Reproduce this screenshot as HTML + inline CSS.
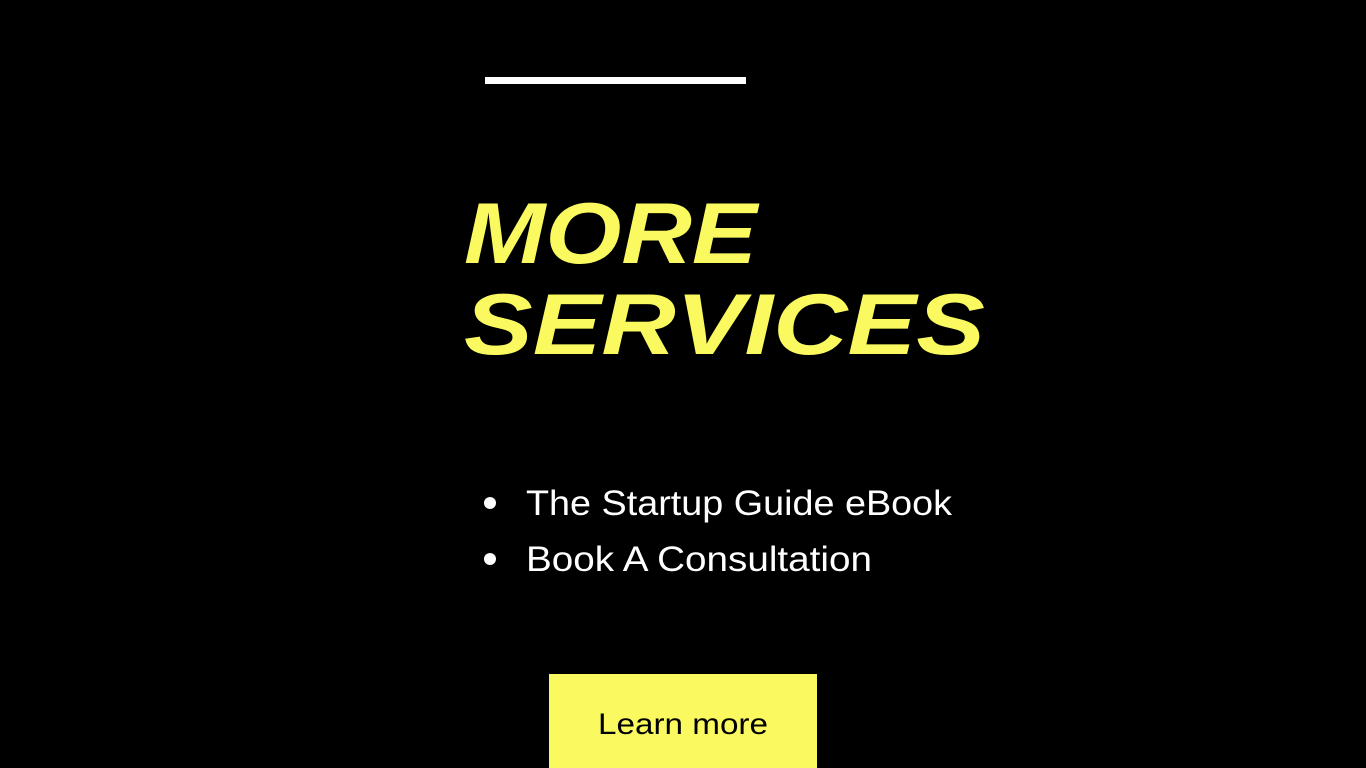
<!DOCTYPE html>
<html><head><meta charset="utf-8"><style>
html,body{margin:0;padding:0;background:#000;width:1366px;height:768px;overflow:hidden}
svg{display:block}
</style></head><body>
<svg width="1366" height="768" viewBox="0 0 1366 768" xmlns="http://www.w3.org/2000/svg">
<rect width="1366" height="768" fill="#000"/>
<rect x="485" y="77" width="261" height="7" fill="#fff"/>
<g fill="#fafa60" font-family="Liberation Sans, sans-serif" font-weight="bold" font-style="italic">
<text x="464" y="263" font-size="86" textLength="293" lengthAdjust="spacingAndGlyphs">MORE</text>
<text x="464" y="354" font-size="86" textLength="521" lengthAdjust="spacingAndGlyphs">SERVICES</text>
</g>
<g fill="#fff" font-family="Liberation Sans, sans-serif" font-size="35">
<circle cx="490" cy="503" r="6"/>
<circle cx="490" cy="559" r="6"/>
<text x="526" y="515" textLength="426" lengthAdjust="spacingAndGlyphs">The Startup Guide eBook</text>
<text x="526" y="571" textLength="346" lengthAdjust="spacingAndGlyphs">Book A Consultation</text>
</g>
<rect x="549" y="674" width="268" height="94" fill="#fafa60"/>
<text x="598" y="734" font-family="Liberation Sans, sans-serif" font-size="30" fill="#000" textLength="170" lengthAdjust="spacingAndGlyphs">Learn more</text>
</svg>
</body></html>
